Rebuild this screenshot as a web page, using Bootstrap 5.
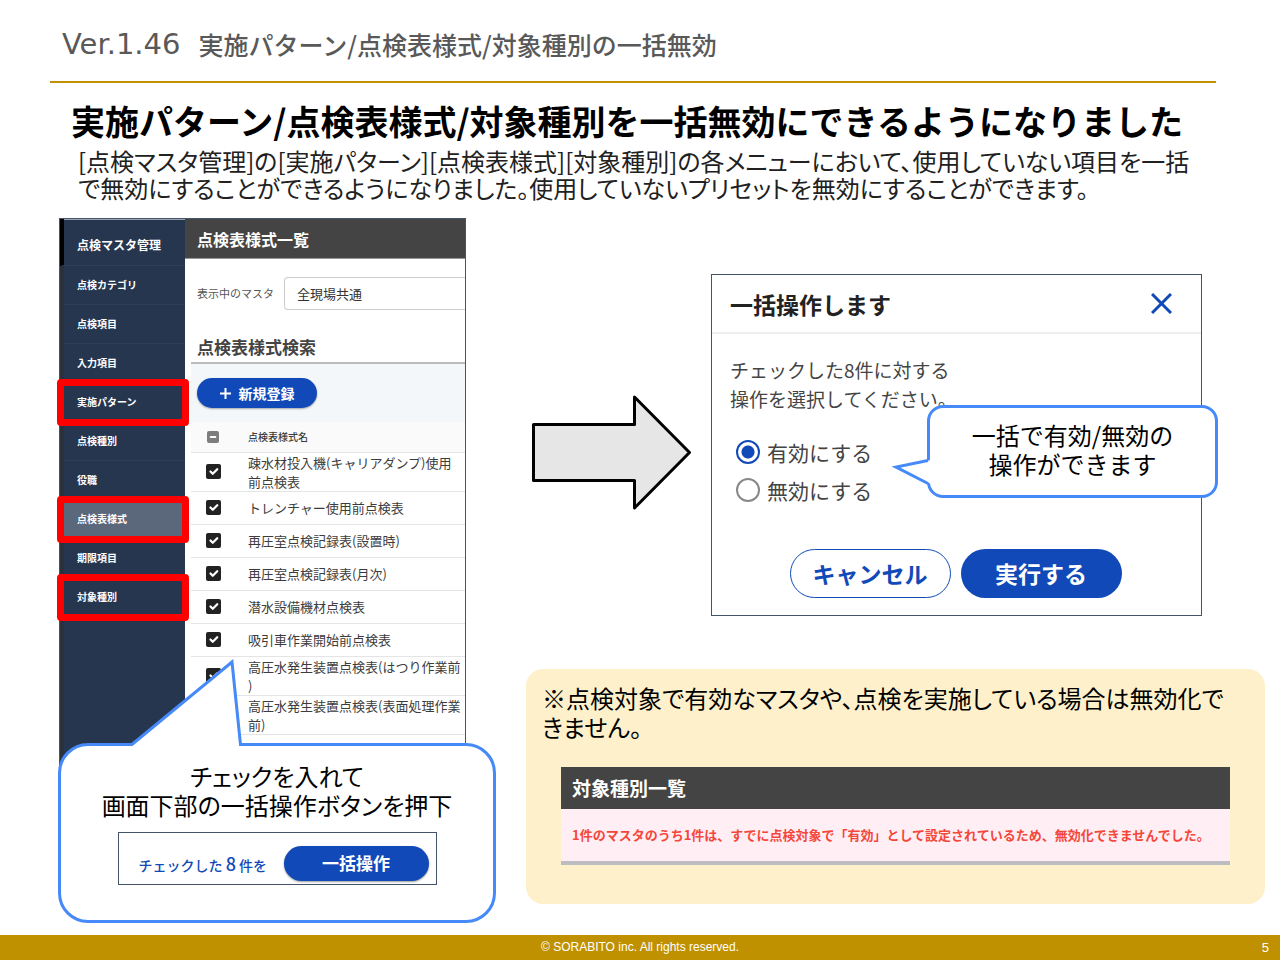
<!DOCTYPE html>
<html lang="ja">
<head>
<meta charset="utf-8">
<meta name="viewport" content="width=device-width, initial-scale=1">
<title>Ver.1.46 実施パターン/点検表様式/対象種別の一括無効</title>
<link href="https://cdn.jsdelivr.net/npm/bootstrap@5.3.0/dist/css/bootstrap.min.css" rel="stylesheet">
<style>
  :root { --gold: #bf9000; --blue: #114ab8; --bubble: #4689f8; --navy: #26364f; --frame: #44546a; }
  body { font-family: "Noto Sans CJK JP", sans-serif; background: #fff; color: #000; line-height: 1.2; }
  .slide-head { margin: 0 64px 0 50px; padding: 27px 12px 20px; border-bottom: 2px solid var(--gold); color: #595959; font-size: 25px; line-height: 34px; font-weight: 500; }
  .version { font-family: "DejaVu Sans", sans-serif; font-size: 29px; line-height: 34px; font-weight: 400; margin-right: 18px; }
  .intro { padding: 16px 40px 0 71px; }
  .intro h1 { font-size: 34px; line-height: 44px; font-weight: 700; margin: 0; }
  .intro p { font-size: 24px; line-height: 27px; margin: 4px 0 0 7px; color: #212121; white-space: nowrap; }
  .kern { font-feature-settings: "palt"; }
  .stage { padding: 17px 15px 12px 59px; gap: 29px; }
  .left-col { flex: 0 0 438px; }

  .app-shot { width: 407px; border: 1px solid var(--frame); border-bottom: 0; background: #fff; }
  .side { width: 125px; background: var(--navy); border-left: 4px solid #2a313c; box-shadow: inset 0 1px #9aa3b0; }
  .side a { display: flex; align-items: center; height: 39px; padding-left: 13px; color: #fff; font-size: 10px; font-weight: 700; text-decoration: none; border-bottom: 1px solid #2c3e5a; position: relative; }
  .side a.top { height: 47px; font-size: 12px; padding-top: 6px; margin-left: -4px; padding-left: 13px; border-left: 4px solid #000; }
  .side a.current { background: #5b677a; }
  .side a.marked::after { content: ""; position: absolute; inset: -4px -4px -5px -7px; border: 7px solid #f00; border-radius: 4px; z-index: 2; }
  .app-head { background: #444; color: #fff; font-size: 16px; font-weight: 700; line-height: 38px; padding: 1px 0 0 12px; border-bottom: 1px solid #999; margin: 0; }
  .field-line { padding: 18px 0 0 12px; gap: 10px; font-size: 11px; color: #555; }
  .master-select { flex: 1; height: 33px; padding: 0 12px; font-size: 13px; color: #333; background: #fff; border: 1px solid #ccc; border-right: 0; border-radius: 4px 0 0 4px; appearance: none; }
  .search-title { font-size: 17px; line-height: 26px; font-weight: 700; color: #444; margin: 24px 0 0 6px; padding: 0 0 2px 6px; border-bottom: 2px solid #bbb; }
  .tool-line { margin-left: 6px; padding: 14px 6px 14px; background: #f4f7fa; }
  .pill { border: 0; border-radius: 50rem; background: var(--blue); color: #fff; font-weight: 700; padding: 0; }
  .pill-new { width: 120px; height: 30px; font-size: 14px; box-shadow: 0 1px 2px #0005; }
  .forms { margin: 0 0 0 6px; padding-bottom: 36px; font-size: 13px; line-height: 19px; color: #3c3c3c; }
  .forms table { width: 100%; border-collapse: collapse; }
  .forms th { font-size: 10px; font-weight: 500; background: #fafafa; height: 30px; }
  .forms td { height: 33px; }
  .forms tr.tall td { height: 39px; }
  .forms tr { border-bottom: 1px solid #e5e5e5; }
  .forms td, .forms th { padding: 0; vertical-align: middle; white-space: nowrap; }
  .forms td:first-child, .forms th:first-child { width: 57px; padding-left: 15px; }
  .forms .form-check-input { display: block; margin: 0; width: 15px; height: 15px; border-radius: 2px; border: 0; }
  .forms .form-check-input:checked { background-color: #222; }
  .forms th .form-check-input, .forms th .form-check-input:indeterminate { width: 12px; height: 12px; margin-left: 1px; background-color: #7d7d7d; }

  .bubble { position: relative; z-index: 3; background: #fff; border: 3px solid var(--bubble); text-align: center; font-size: 24px; line-height: 29px; }
  .bubble svg { position: absolute; overflow: visible; }
  .bubble-left { margin: -28px 1px 0 -1px; border-radius: 30px; padding: 15px 20px 35px; }
  .bubble-left .tail { left: 70px; top: -85px; }
  .batch { width: 319px; height: 53px; margin: 13px auto 0; border: 1px solid var(--frame); padding: 8px 7px 0 20px; color: var(--blue); font-size: 14px; font-weight: 500; line-height: 24px; font-feature-settings: normal; }
  .batch span { padding-top: 10px; }
  .batch b { font-size: 18px; font-weight: 500; }
  .pill-batch { width: 145px; height: 35px; font-size: 17px; margin-top: 5px; box-shadow: 0 1px 2px #0006; }

  .flow { padding-left: 6px; gap: 19px; margin-top: 56px; margin-right: 63px; }
  .flow > svg { margin-top: 121px; }
  .dialog-shot { position: relative; flex: 1; border: 1px solid var(--frame); }
  .dialog-top { padding: 0 29px 0 18px; height: 59px; border-bottom: 2px solid #eee; }
  .dialog-top h2 { font-size: 23px; font-weight: 700; color: #222; margin: 2px 0 0; }
  .dialog-body { padding: 21px 18px 17px; color: #444; font-size: 19px; line-height: 29px; }
  .choice { display: flex; align-items: center; gap: 7px; margin-left: 6px; font-size: 21px; height: 38px; }
  .choice .form-check-input { width: 24px; height: 24px; margin: 0; border: 2px solid #888; background: #fff; flex: none; }
  .choice .form-check-input:checked { border-color: var(--blue); background: radial-gradient(circle, var(--blue) 6px, #fff 7px); }
  .actions { gap: 10px; margin-top: 40px; padding-right: 2px; }
  .pill-lg { width: 161px; height: 49px; font-size: 23px; }
  .pill-line { background: #fff; color: var(--blue); border: 1px solid var(--blue); }
  .bubble-right { position: absolute; right: -17px; top: 130px; width: 291px; border-radius: 16px; padding: 12px 0 17px; }
  .bubble-right .tail { left: -35px; top: 51px; }

  .note { background: #fdf0cb; border-radius: 17px; margin-top: 53px; padding: 14px 16px 39px; font-size: 24px; line-height: 29px; }
  .result { margin: 26px 19px 0; border-bottom: 4px solid #bdbcc0; background: #ffeff4; }
  .result h3 { margin: 0; background: #444; color: #fff; font-size: 19px; font-weight: 700; line-height: 42px; padding-left: 11px; }
  .result p { margin: 0; color: #f4473c; font-size: 13px; font-weight: 700; line-height: 52px; padding-left: 11px; white-space: nowrap; }
  .foot { background: var(--gold); color: #fff; height: 25px; font-family: "Liberation Sans", sans-serif; font-size: 12px; line-height: 25px; position: relative; text-align: center; }
  .foot .page-no { position: absolute; right: 11px; top: 0; font-size: 13px; }
</style>
</head>
<body class="d-flex flex-column min-vh-100">
<header class="slide-head d-flex align-items-center"><span class="version">Ver.1.46</span><span>実施パターン/点検表様式/対象種別の一括無効</span></header>

<main class="flex-grow-1">
  <section class="intro">
    <h1>実施パターン/点検表様式/対象種別を一括無効にできるようになりました</h1>
    <p class="kern">[点検マスタ管理]の[実施パターン][点検表様式][対象種別]の各メニューにおいて、使用していない項目を一括<br>で無効にすることができるようになりました。使用していないプリセットを無効にすることができます。</p>
  </section>

  <div class="stage d-flex">
    <section class="left-col">
      <div class="app-shot d-flex">
        <nav class="side flex-shrink-0">
          <a class="top" href="#">点検マスタ管理</a>
          <a href="#">点検カテゴリ</a>
          <a href="#">点検項目</a>
          <a href="#">入力項目</a>
          <a class="marked" href="#">実施パターン</a>
          <a href="#">点検種別</a>
          <a href="#">役職</a>
          <a class="marked current" href="#">点検表様式</a>
          <a href="#">期限項目</a>
          <a class="marked" href="#">対象種別</a>
        </nav>
        <div class="flex-grow-1">
          <h2 class="app-head">点検表様式一覧</h2>
          <div class="field-line d-flex align-items-center">
            <label for="master">表示中のマスタ</label>
            <select id="master" class="master-select"><option>全現場共通</option></select>
          </div>
          <h3 class="search-title">点検表様式検索</h3>
          <div class="tool-line">
            <button type="button" class="pill pill-new d-flex align-items-center justify-content-center gap-2">
              <svg width="11" height="11" viewBox="0 0 11 11" stroke="#fff" stroke-width="2" aria-hidden="true"><path d="M5.500 0v11M0 5.500h11"/></svg>新規登録
            </button>
          </div>
          <div class="forms">
            <table>
              <thead><tr><th><input class="form-check-input" type="checkbox" id="all" aria-label="すべて選択"></th><th>点検表様式名</th></tr></thead>
              <tbody>
                <tr class="tall"><td><input class="form-check-input" type="checkbox" id="c1" checked></td><td><label for="c1">疎水材投入機(キャリアダンプ)使用<br>前点検表</label></td></tr>
                <tr><td><input class="form-check-input" type="checkbox" id="c2" checked></td><td><label for="c2">トレンチャー使用前点検表</label></td></tr>
                <tr><td><input class="form-check-input" type="checkbox" id="c3" checked></td><td><label for="c3">再圧室点検記録表(設置時)</label></td></tr>
                <tr><td><input class="form-check-input" type="checkbox" id="c4" checked></td><td><label for="c4">再圧室点検記録表(月次)</label></td></tr>
                <tr><td><input class="form-check-input" type="checkbox" id="c5" checked></td><td><label for="c5">潜水設備機材点検表</label></td></tr>
                <tr><td><input class="form-check-input" type="checkbox" id="c6" checked></td><td><label for="c6">吸引車作業開始前点検表</label></td></tr>
                <tr class="tall"><td><input class="form-check-input" type="checkbox" id="c7" checked></td><td><label for="c7">高圧水発生装置点検表(はつり作業前<br>)</label></td></tr>
                <tr class="tall"><td><input class="form-check-input" type="checkbox" id="c8" checked></td><td><label for="c8">高圧水発生装置点検表(表面処理作業<br>前)</label></td></tr>
              </tbody>
            </table>
          </div>
        </div>
      </div>
      <div class="bubble bubble-left kern">
        <svg class="tail" width="112" height="88" viewBox="0 0 112 88" aria-hidden="true"><path d="M1 84L101 1L110 84V88H1Z" fill="#fff"/><path d="M0 83.500H1L101 1L109.500 83.500H112" fill="none" stroke="#4689f8" stroke-width="3"/></svg>
        チェックを入れて<br>画面下部の一括操作ボタンを押下
        <div class="batch d-flex align-items-start justify-content-between">
          <span>チェックした <b>8</b> 件を</span>
          <button type="button" class="pill pill-batch">一括操作</button>
        </div>
      </div>
    </section>

    <section class="flex-grow-1">
      <div class="flow d-flex">
        <svg class="flex-shrink-0" width="160" height="116" viewBox="0 0 160 116" aria-hidden="true"><path d="M1.500 29.500H102.500V2L157.500 57.500L102.500 113V85.500H1.500Z" fill="#e6e6e6" stroke="#000" stroke-width="3" stroke-linejoin="round"/></svg>
        <div class="dialog-shot">
          <div class="dialog-top d-flex align-items-center justify-content-between">
            <h2>一括操作します</h2>
            <button type="button" class="border-0 bg-transparent p-0 lh-1" aria-label="閉じる"><svg width="21" height="21" viewBox="0 0 21 21" stroke="#114ab8" stroke-width="3" aria-hidden="true"><path d="M1 1L20 20M20 1L1 20"/></svg></button>
          </div>
          <div class="dialog-body">
            チェックした8件に対する<br>操作を選択してください。
            <div class="mt-3 pt-1">
              <div class="choice"><input class="form-check-input" type="radio" name="op" id="on" checked><label for="on">有効にする</label></div>
              <div class="choice"><input class="form-check-input" type="radio" name="op" id="off"><label for="off">無効にする</label></div>
            </div>
            <div class="actions d-flex justify-content-center">
              <button type="button" class="pill pill-lg pill-line">キャンセル</button>
              <button type="button" class="pill pill-lg">実行する</button>
            </div>
          </div>
          <div class="bubble bubble-right">
            <svg class="tail" width="36" height="28" viewBox="0 0 36 28" aria-hidden="true"><path d="M36 1L1 8L36 25Z" fill="#fff"/><path d="M33 1.500L1 8L33 24.500" fill="none" stroke="#4689f8" stroke-width="3"/></svg>
            一括で有効/無効の<br>操作ができます
          </div>
        </div>
      </div>

      <div class="note">
        <div class="kern">※点検対象で有効なマスタや、点検を実施している場合は無効化で<br>きません。</div>
        <div class="result">
          <h3>対象種別一覧</h3>
          <p>1件のマスタのうち1件は、すでに点検対象で「有効」として設定されているため、無効化できませんでした。</p>
        </div>
      </div>
    </section>
  </div>
</main>

<footer class="foot">© SORABITO inc. All rights reserved.<span class="page-no">5</span></footer>
<script src="https://cdn.jsdelivr.net/npm/bootstrap@5.3.0/dist/js/bootstrap.bundle.min.js"></script>
<script>
  // The header box shows the mixed state
  document.getElementById('all').indeterminate = true;
</script>
</body>
</html>
